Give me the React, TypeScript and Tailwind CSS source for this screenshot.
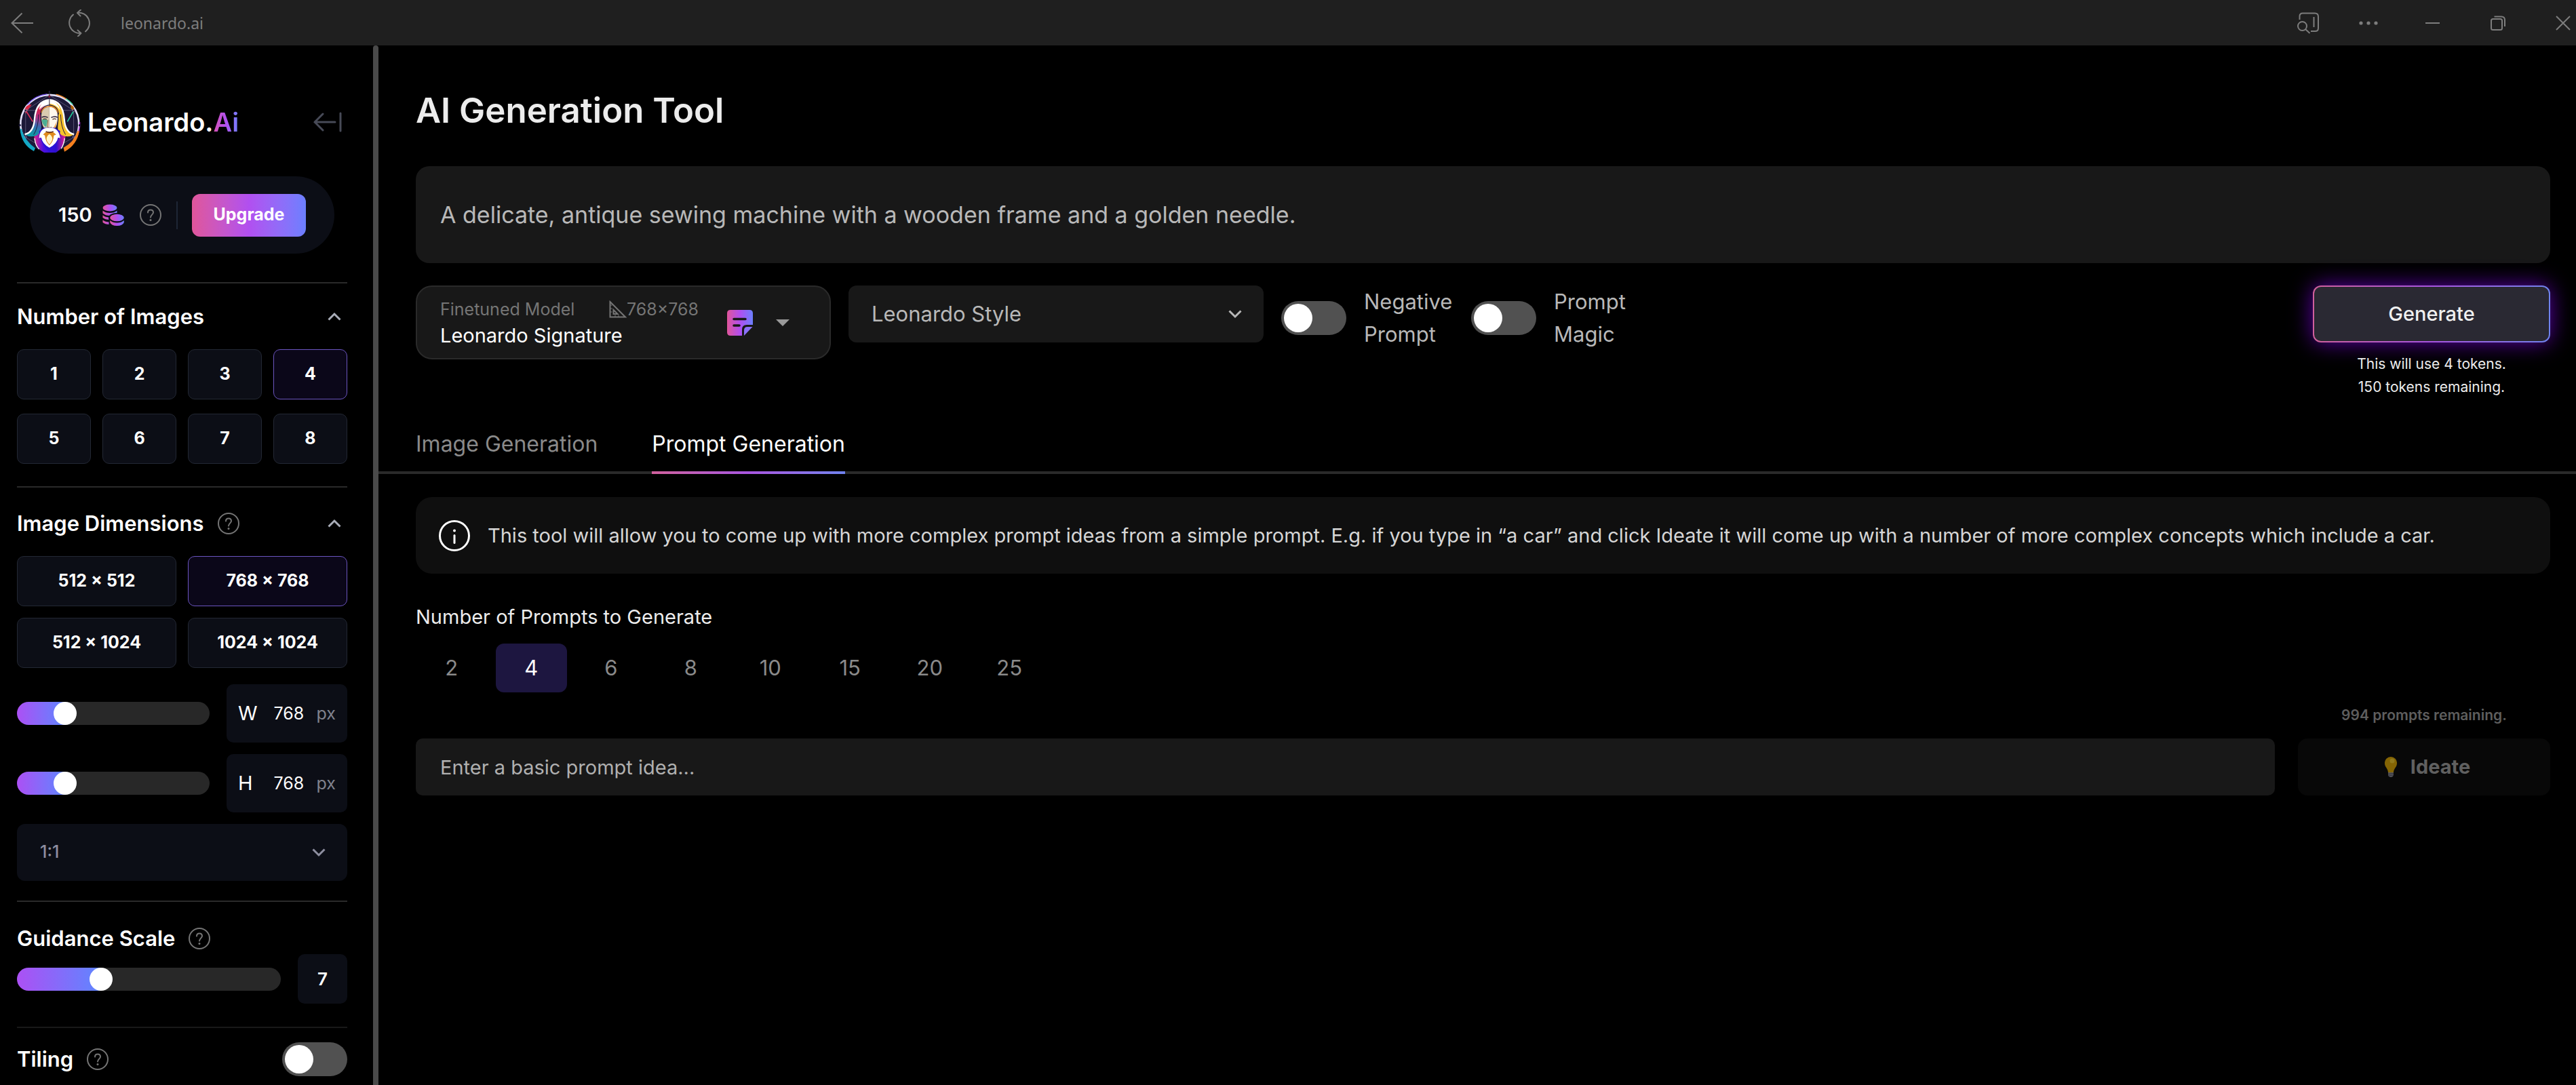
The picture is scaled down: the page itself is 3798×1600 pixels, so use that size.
import { useState } from "react";
import type { ReactNode } from "react";
import clsx from "clsx";

const IMAGE_COUNTS = [1, 2, 3, 4, 5, 6, 7, 8];
const DIMENSIONS = ["512 × 512", "768 × 768", "512 × 1024", "1024 × 1024"];
const PROMPT_COUNTS = [2, 4, 6, 8, 10, 15, 20, 25];

function BrandGradient({ id }: { id: string }) {
  return (
    <linearGradient id={id} x1="0" y1="0" x2="1" y2="0">
      <stop offset="0" stopColor="#e0559a" />
      <stop offset="0.5" stopColor="#b14ff0" />
      <stop offset="1" stopColor="#6b7fff" />
    </linearGradient>
  );
}

function LogoMark() {
  return (
    <svg viewBox="20 8 280 284" className="h-[94px] w-[93px] shrink-0" aria-hidden fill="none">
      <defs>
        <linearGradient id="hairLeft" gradientUnits="userSpaceOnUse" x1="130" y1="70" x2="80" y2="205">
          <stop offset="0" stopColor="#ffffff" />
          <stop offset="0.2" stopColor="#d8204c" />
          <stop offset="0.45" stopColor="#b03484" />
          <stop offset="0.7" stopColor="#3b6bb0" />
          <stop offset="1" stopColor="#0f98a5" />
        </linearGradient>
        <linearGradient id="robe" x1="0" y1="0" x2="1" y2="0">
          <stop offset="0" stopColor="#e0248a" />
          <stop offset="0.3" stopColor="#4a10e0" />
          <stop offset="0.7" stopColor="#2a0fd0" />
          <stop offset="1" stopColor="#f0208a" />
        </linearGradient>
        <clipPath id="logoClip">
          <path d="M20 8h280v278H20z" />
        </clipPath>
      </defs>
      <g clipPath="url(#logoClip)">
        <circle cx="159" cy="158" r="126" fill="#1c1838" />
        <path d="M52 232A130 130 0 1 1 268 230" stroke="#e4e0fa" strokeWidth="8" />
        <path d="M60 72A132 132 0 0 1 148 25" stroke="#6d4ae8" strokeWidth="4" />
        <path d="M188 27a134 134 0 0 1 48 22" stroke="#f08a2c" strokeWidth="5" />
        <path d="M232 46a134 134 0 0 1 30 26" stroke="#52e0b0" strokeWidth="5" />
        <path d="M47 96q8-26 32-24L52 112z" fill="#dc2440" />
        <path d="M252 74q20 4 16 32l-14-16z" fill="#b46408" />
        <path d="M293 150a134 134 0 0 1-20 80" stroke="#a32cc8" strokeWidth="5" />
        <path d="M27 180q6 70 62 100l6-14q-44-30-62-86z" fill="#14a8c4" />
        <path d="M291 190q-10 62-66 92l-4-18q46-24 62-74z" fill="#f5801e" />
        <g stroke="#77708f" strokeWidth="2">
          <path d="M158 30L52 98v120l106 62 108-62V98zM52 98h214" />
        </g>
        <path d="M56 104l28 44" stroke="#e03058" strokeWidth="5" />
        <path d="M264 104l-26 44" stroke="#20c898" strokeWidth="5" />
        {/* robe */}
        <path d="M90 214q4 52 48 74h46q38-22 46-74l-34-30h-72z" fill="url(#robe)" />
        <path d="M92 222q4 34 20 48M226 222q-4 30-16 46" stroke="#ffffff" strokeWidth="4" />
        {/* hair */}
        <path d="M158 50C112 52 98 92 94 136C90 176 76 200 48 206Q76 222 104 208Q124 192 122 164Q116 140 118 118Q120 88 158 78Z" fill="url(#hairLeft)" />
        <path d="M158 50C204 52 218 92 222 136C226 176 240 200 268 206Q240 222 212 208Q192 192 196 164Q200 140 198 118Q196 88 158 78Z" fill="#f8c32c" />
        <path d="M48 205C80 198 90 168 92 136C96 84 118 54 158 51C198 54 220 84 224 136C226 168 236 198 268 205" stroke="#ffffff" strokeWidth="7" />
        <path d="M112 96Q120 58 158 50Q196 58 206 96Q188 72 158 68Q130 72 112 96Z" fill="#ffffff" />
        <path d="M110 116Q108 176 88 206M208 116Q210 176 230 206" stroke="#20183c" strokeWidth="3" />
        {/* face */}
        <path d="M158 80Q122 86 122 124Q122 168 140 182L158 188Z" fill="#d9cbb0" />
        <path d="M158 80Q194 86 195 124Q195 168 178 182L158 188Z" fill="#fff8ec" />
        <path d="M124 140Q136 134 150 142L144 172Q126 164 124 140Z" fill="#4cae94" />
        <path d="M193 138L186 174L172 180Q188 160 193 138Z" fill="#f0a850" />
        <path d="M152 140L149 172L158 176L168 172" stroke="#8a6848" strokeWidth="3" />
        <path d="M124 129Q138 122 151 130M166 130Q180 122 194 129" stroke="#2a1c38" strokeWidth="5" />
        <path d="M130 138Q138 132 146 139M172 139Q180 132 188 138" stroke="#5a3c2c" strokeWidth="4" />
        <path d="M118 116Q122 78 158 74Q196 78 199 116" stroke="#20183c" strokeWidth="4" />
        <path d="M122 108Q128 82 158 80Q190 82 195 108" stroke="#e8821c" strokeWidth="4" />
        {/* beard */}
        <path d="M112 190Q118 250 158 284Q200 250 206 190L182 176H134Z" fill="#2b12d8" />
        <path d="M158 176C128 174 114 190 112 222Q118 218 122 220Q126 246 158 264Q192 246 196 220Q200 218 206 222C202 190 188 174 158 176Z" fill="#ffffff" />
        <path d="M130 206Q142 190 158 194Q174 190 188 206L178 210Q176 238 158 254Q140 238 138 210Z" fill="#df8a1c" />
        <path d="M158 204Q184 222 158 250Q132 222 158 204Z" fill="#fff4c8" />
        <path d="M142 192Q158 200 176 192" stroke="#4a1c18" strokeWidth="4" />
        <path d="M158 10v62" stroke="#2a1c38" strokeWidth="3" />
        <circle cx="158" cy="36" r="5" fill="#7c1838" />
        <g fill="#16122c" stroke="#a8a0c8" strokeWidth="2">
          <circle cx="52" cy="98" r="5" />
          <circle cx="266" cy="98" r="5" />
          <circle cx="52" cy="216" r="4" />
          <circle cx="266" cy="216" r="4" />
        </g>
      </g>
      <circle cx="158" cy="16" r="4" fill="#1c1838" />
      <circle cx="26" cy="164" r="5" fill="#1c1838" />
      <circle cx="293" cy="164" r="5" fill="#1c1838" />
    </svg>
  );
}

function CoinsIcon() {
  return (
    <svg viewBox="0 0 32 32" className="size-8" aria-hidden>
      <defs>
        <BrandGradient id="coins" />
        <mask id="coinsMask">
          <path fill="#fff" d="M0 0h32v32H0z" />
          <ellipse cx="21" cy="20" rx="12" ry="7" fill="#000" />
          <path fill="#000" d="M9.500 20h23v12h-23z" />
        </mask>
      </defs>
      <g fill="url(#coins)">
        <g mask="url(#coinsMask)">
          <path d="M0.500 5.500a10.500 5 0 1 0 21 0a10.500 5 0 1 0-21 0zM0.500 9.500q4 3.500 10.500 3.500t10.500-3.500v4q-4 3.500-10.500 3.500T0.500 13.500zM0.500 16.200q4 3.300 9.500 3.300v3.500Q4 23 0.500 20zM0.500 23.200q4 3.300 9.500 3.300V30Q4 30 0.500 27z" />
        </g>
        <ellipse cx="21.500" cy="20" rx="10.300" ry="5.200" />
        <path d="M11.200 24q4 3.600 10.300 3.600T31.800 24v3q-2 5-10.300 5t-10.300-5z" />
      </g>
    </svg>
  );
}

function HelpIcon() {
  return (
    <svg viewBox="0 0 32 32" className="size-8 shrink-0" fill="none" stroke="#757575" strokeWidth="2" aria-hidden>
      <circle cx="16" cy="16" r="15" />
      <path d="M12 12.500c0-2.500 1.700-4 4-4s4 1.500 4 3.700c0 3.300-4 3.600-4 7.300" strokeLinecap="round" />
      <circle cx="16" cy="23.500" r="1.500" fill="#757575" stroke="none" />
    </svg>
  );
}

function HelpButton({ topic }: { topic: string }) {
  return (
    <button type="button" aria-label={`About ${topic}`}>
      <HelpIcon />
    </button>
  );
}

function Chevron({ up, className }: { up?: boolean; className?: string }) {
  return (
    <svg viewBox="0 0 20 14" className={clsx("h-[14px] w-5", className)} fill="none" stroke="currentColor" strokeWidth="3" aria-hidden>
      <path d={up ? "M1.500 11.500l8.500-8.500 8.500 8.500" : "M1.500 2.500l8.500 8.500 8.500-8.500"} />
    </svg>
  );
}

function Toggle({ label }: { label: string }) {
  return (
    <input
      type="checkbox"
      role="switch"
      aria-label={label}
      className="flex h-[50px] w-24 shrink-0 cursor-pointer appearance-none items-center rounded-full bg-[#515151] px-1 before:size-[42px] before:rounded-full before:bg-white checked:justify-end checked:bg-[#7c3aed]"
    />
  );
}

function Slider({ label, min, max, value, onChange }: { label: string; min: number; max: number; value: number; onChange: (v: number) => void }) {
  const ratio = (value - min) / (max - min);
  const stop = `calc(17px + (100% - 34px) * ${ratio})`;
  return (
    <input
      type="range"
      aria-label={label}
      min={min}
      max={max}
      value={value}
      onChange={(e) => onChange(Number(e.target.value))}
      className="h-[34px] min-w-0 flex-1 cursor-pointer appearance-none rounded-full [&::-webkit-slider-thumb]:size-[34px] [&::-webkit-slider-thumb]:appearance-none [&::-webkit-slider-thumb]:rounded-full [&::-webkit-slider-thumb]:bg-white"
      style={{ background: `linear-gradient(90deg, #ac50f4, #5f86ff ${stop}, #282828 ${stop})` }}
    />
  );
}

function OptionButton({ active, onClick, children }: { active: boolean; onClick: () => void; children: ReactNode }) {
  return (
    <button
      type="button"
      aria-pressed={active}
      onClick={onClick}
      className={clsx(
        "h-[74px] rounded-[10px] border text-[25px] font-bold text-white",
        active ? "border-[#6b55c0] bg-[#0b0719]" : "border-[#232834] bg-[#0c0e16]"
      )}
    >
      {children}
    </button>
  );
}

function SizeField({ letter, label, value, onChange }: { letter: string; label: string; value: number; onChange: (v: number) => void }) {
  return (
    <div className="flex items-center gap-[25px]">
      <Slider label={`${label} slider`} min={512} max={1696} value={value} onChange={onChange} />
      <label className="flex h-[86px] w-[178px] items-center justify-between rounded-[10px] bg-[#0c0e16] px-[17px]">
        <span className="text-[29px] text-white">{letter}</span>
        <span className="flex items-center gap-4 pt-[2px] text-[25px]">
          <input
            type="text"
            aria-label={label}
            value={value}
            onChange={(e) => onChange(Number(e.target.value) || 512)}
            className="w-[47px] bg-transparent text-white outline-none"
          />
          <span className="text-[#80828e]">px</span>
        </span>
      </label>
    </div>
  );
}

function TitleBar() {
  return (
    <header className="flex h-[67px] shrink-0 items-center bg-[#1f1f1f] text-[#7d7d7d]">
      <button type="button" aria-label="Back" className="ml-4">
        <svg viewBox="0 0 34 32" className="h-8 w-[34px]" fill="none" stroke="currentColor" strokeWidth="2" aria-hidden>
          <path d="M33 16H1.500M16.500 1.500L1.500 16l15 14.500" />
        </svg>
      </button>
      <button type="button" aria-label="Reload" className="ml-[50px]">
        <svg viewBox="0 0 34 40" className="h-10 w-[34px]" fill="none" stroke="currentColor" strokeWidth="2" strokeLinecap="round" strokeLinejoin="round" aria-hidden>
          <path d="M8 7.500A15.500 15.500 0 0 0 19.500 35M14.500 30.500l5 4.500-4.500 4.500" />
          <path d="M26 32.500A15.500 15.500 0 0 0 14 5M19 .5L14 5l4.500 4.500" />
        </svg>
      </button>
      <span className="ml-[44px] pt-[2px] font-['Noto_Sans',sans-serif] text-[23px]">leonardo.ai</span>
      <div className="ml-auto flex items-center pr-2">
        <button type="button" aria-label="Search in sidebar">
          <svg viewBox="0 0 32 32" className="size-8" fill="none" stroke="currentColor" strokeWidth="2" aria-hidden>
            <path d="M3.500 11V6q0-4.500 4.500-4.500h18q5 0 5 5v17q0 4.500-4.500 4.500H20M24.500 7v15" />
            <circle cx="7.500" cy="20.500" r="6.500" />
            <path d="M12 25l6.500 6" />
          </svg>
        </button>
        <button type="button" aria-label="More" className="ml-[59px]">
          <svg viewBox="0 0 28 6" className="h-[6px] w-7" fill="currentColor" aria-hidden>
            <circle cx="3" cy="3" r="2.600" />
            <circle cx="14" cy="3" r="2.600" />
            <circle cx="25" cy="3" r="2.600" />
          </svg>
        </button>
        <button type="button" aria-label="Minimize" className="ml-[70px] flex h-[22px] w-[21px] items-center">
          <span className="h-[2px] flex-1 bg-[#7d7d7d]" />
        </button>
        <button type="button" aria-label="Restore" className="ml-[75px]">
          <svg viewBox="0 0 22 22" className="size-[22px]" fill="none" stroke="currentColor" strokeWidth="2" aria-hidden>
            <rect x="1" y="5" width="16" height="16" rx="2.500" />
            <path d="M5.500 1.500H16q5 0 5 5V16" />
          </svg>
        </button>
        <button type="button" aria-label="Close" className="ml-[74px]">
          <svg viewBox="0 0 22 22" className="size-[22px]" fill="none" stroke="currentColor" strokeWidth="2" aria-hidden>
            <path d="M1 1l20 20M21 1L1 21" />
          </svg>
        </button>
      </div>
    </header>
  );
}

function SectionHeading({ children, help, collapsible }: { children: string; help?: boolean; collapsible?: boolean }) {
  return (
    <div className="flex h-10 items-center">
      <h2 className="text-[31px] leading-10 font-semibold text-white">{children}</h2>
      {help ? (
        <span className="ml-5 flex">
          <HelpButton topic={children} />
        </span>
      ) : null}
      {collapsible ? (
        <button type="button" aria-label={`Collapse ${children}`} className="mr-[9px] ml-auto text-[#a9adb8]">
          <Chevron up />
        </button>
      ) : null}
    </div>
  );
}

function Sidebar() {
  const [count, setCount] = useState(4);
  const [dimension, setDimension] = useState("768 × 768");
  const [width, setWidth] = useState(768);
  const [height, setHeight] = useState(768);
  const [guidance, setGuidance] = useState(7);

  return (
    <aside className="flex w-[558px] shrink-0">
      <div className="flex-1 pr-[38px] pl-[25px]">
        <div className="mt-[66px] flex h-[94px] items-center">
          <a href="#home" className="flex items-center pl-[2px]">
            <LogoMark />
            <span className="ml-[9px] text-[38px] font-semibold text-white">
              Leonardo.
              <span className="bg-linear-to-r from-[#d94fb0] via-[#b14ff0] to-[#6b7fff] bg-clip-text text-transparent">Ai</span>
            </span>
          </a>
          <button type="button" aria-label="Collapse sidebar" className="mr-[8px] ml-auto text-[#474a57]">
            <svg viewBox="0 0 42 30" className="h-[30px] w-[42px]" fill="none" stroke="currentColor" strokeWidth="3" strokeLinecap="round" aria-hidden>
              <path d="M32 15H2M14 3L2 15l12 12M40 2v26" />
            </svg>
          </button>
        </div>

        <div className="mx-[19px] mt-[33px] flex h-[114px] items-center rounded-full bg-[#0c0e16] px-[42px]">
          <span className="text-[29px] font-semibold text-white">150</span>
          <span className="ml-[15px]">
            <CoinsIcon />
          </span>
          <span className="ml-[23px] flex">
            <HelpButton topic="tokens" />
          </span>
          <span className="ml-[22px] h-[41px] w-[2px] bg-[#1e2636]" />
          <button
            type="button"
            className="ml-auto h-[63px] w-[168px] rounded-xl bg-linear-to-r from-[#e0559a] via-[#b14ff0] to-[#6b7fff] text-[25px] font-bold text-white"
          >
            Upgrade
          </button>
        </div>

        <section className="mt-[42px] border-t-2 border-[#2a2a2a] pt-[29px]">
          <SectionHeading collapsible>Number of Images</SectionHeading>
          <div className="mt-[28px] grid grid-cols-4 gap-x-[17px] gap-y-[21px]">
            {IMAGE_COUNTS.map((n) => (
              <OptionButton key={n} active={n === count} onClick={() => setCount(n)}>
                {n}
              </OptionButton>
            ))}
          </div>
        </section>

        <section className="mt-[33px] border-t-2 border-[#2a2a2a] pt-[33px]">
          <SectionHeading help collapsible>
            Image Dimensions
          </SectionHeading>
          <div className="mt-[28px] grid grid-cols-2 gap-[17px]">
            {DIMENSIONS.map((d) => (
              <OptionButton key={d} active={d === dimension} onClick={() => setDimension(d)}>
                {d}
              </OptionButton>
            ))}
          </div>
          <div className="mt-6 flex flex-col gap-[17px]">
            <SizeField letter="W" label="Width" value={width} onChange={setWidth} />
            <SizeField letter="H" label="Height" value={height} onChange={setHeight} />
            <div className="relative">
              <select
                aria-label="Aspect ratio"
                defaultValue="1:1"
                className="h-[84px] w-full appearance-none rounded-[12px] bg-[#0c0e16] px-[34px] text-[25px] font-medium text-[#8e8fa0]"
              >
                <option>1:1</option>
                <option>16:9</option>
                <option>4:3</option>
              </select>
              <Chevron className="pointer-events-none absolute top-[35px] right-8 text-[#8e8fa0]" />
            </div>
          </div>
        </section>

        <section className="mt-[29px] border-t-2 border-[#2a2a2a] pt-[34px]">
          <SectionHeading help>Guidance Scale</SectionHeading>
          <div className="mt-[3px] flex items-center gap-[25px]">
            <Slider label="Guidance Scale" min={1} max={21} value={guidance} onChange={setGuidance} />
            <output className="flex h-[73px] w-[73px] items-center justify-center rounded-[10px] bg-[#0c0e16] text-[26px] font-semibold text-white">
              {guidance}
            </output>
          </div>
        </section>

        <section className="mt-[34px] flex items-center justify-between border-t-2 border-[#181818] pt-[21px]">
          <SectionHeading help>Tiling</SectionHeading>
          <Toggle label="Tiling" />
        </section>
      </div>
      <div className="w-2 rounded-t-full bg-[#4a4a4a]" />
    </aside>
  );
}

function ModelPicker() {
  return (
    <button type="button" className="flex h-[109px] w-[612px] items-center rounded-3xl border-2 border-[#2a2a2a] bg-[#181818] px-[34px] text-left">
      <span className="flex w-[381px] flex-col">
        <span className="flex items-center justify-between text-[25px] leading-[38px] text-[#757575]">
          Finetuned Model
          <span className="flex items-center">
            <svg viewBox="0 0 26 26" className="size-[26px]" fill="none" stroke="#757575" strokeWidth="2" aria-hidden>
              <path d="M1.500 2v22.500H24zM6.500 14v6h6z" />
              <path d="M1.500 7h3M1.500 12h3M1.500 17h3M9 24.500v-3M14 24.500v-3" strokeWidth="1" />
            </svg>
            768×768
          </span>
        </span>
        <span className="text-[29px] leading-10 text-white">Leonardo Signature</span>
      </span>
      <svg viewBox="0 0 38 38" className="ml-[42px] size-[38px]" aria-hidden>
        <defs>
          <BrandGradient id="note" />
        </defs>
        <path d="M5 0h28q5 0 5 5v17h-9q-7 0-7 7v9H5q-5 0-5-5V5q0-5 5-5z" fill="url(#note)" />
        <path d="M25 38v-8q0-5 5-5h7.500z" fill="#8b70fa" />
        <path d="M10 13.500h17M10 23h8" stroke="#181818" strokeWidth="3.500" strokeLinecap="round" />
      </svg>
      <svg viewBox="0 0 20 10" className="ml-[34px] h-[10px] w-5" fill="#9a9a9a" aria-hidden>
        <path d="M0 0h20L10 10z" />
      </svg>
    </button>
  );
}

function TabLink({ href, active, children }: { href: string; active?: boolean; children: ReactNode }) {
  return (
    <a href={href} aria-current={active ? "page" : undefined} className={clsx("-mb-1 flex flex-col", active ? "text-white" : "text-[#8a8a8a]")}>
      <span className="pb-4">{children}</span>
      {active ? <span className="h-1 bg-linear-to-r from-[#d0609c] via-[#a855e0] to-[#6f82ee]" /> : null}
    </a>
  );
}

function PromptGeneration() {
  const [count, setCount] = useState(4);
  return (
    <div className="pr-[38px] pl-[55px]">
      <div className="mt-[34px] flex h-[113px] items-center rounded-3xl bg-[#0f0f0f] px-[33px]">
        <svg viewBox="0 0 48 48" className="size-12 shrink-0" fill="none" stroke="#fff" strokeWidth="3" strokeLinecap="round" aria-hidden>
          <circle cx="24" cy="24" r="21.500" />
          <path d="M24 23.500v11" />
          <circle cx="24" cy="16.500" r="2" fill="#fff" stroke="none" />
        </svg>
        <p className="ml-[25px] text-[29px] text-[#d6d6d6]">
          This tool will allow you to come up with more complex prompt ideas from a simple prompt. E.g. if you type in “a car” and click Ideate it will come up with a number of more complex concepts which include a car.
        </p>
      </div>

      <h2 className="mt-[44px] text-[29px] leading-10 text-[#ececec]">Number of Prompts to Generate</h2>
      <div className="mt-[19px] flex w-[928px] gap-3">
        {PROMPT_COUNTS.map((n) => (
          <button
            key={n}
            type="button"
            aria-pressed={n === count}
            onClick={() => setCount(n)}
            className={clsx("h-[72px] flex-1 rounded-xl text-[31px]", n === count ? "bg-[#1d1640] text-white" : "text-[#8a8a8a]")}
          >
            {n}
          </button>
        ))}
      </div>

      <div className="mt-[19px] flex items-end gap-[34px]">
        <input
          type="text"
          aria-label="Basic prompt idea"
          placeholder="Enter a basic prompt idea..."
          className="h-[84px] min-w-0 flex-1 rounded-[10px] bg-[#181818] px-9 text-[29px] text-white outline-none placeholder:text-[#b0b0b0]"
        />
        <div className="flex w-[372px] flex-col">
          <p className="text-center text-[21px] leading-[30px] font-semibold text-[#5e5e5e]">994 prompts remaining.</p>
          <button
            type="button"
            className="mt-[19px] flex h-[84px] items-center justify-center gap-5 rounded-[14px] bg-[#080808] pl-[10px] text-[29px] font-bold text-[#606060]"
          >
            <svg viewBox="0 0 18 30" className="h-[30px] w-[18px]" aria-hidden>
              <path d="M9 0a9 9 0 0 1 9 9.500c0 6-4.500 7-5 13.500H5C4.500 16.500 0 15.500 0 9.500A9 9 0 0 1 9 0z" fill="#846404" />
              <circle cx="11" cy="6" r="3.500" fill="#927a1c" />
              <path d="M5 23h8v4q-1 3-4 3t-4-3z" fill="#55555c" />
              <path d="M5 25.500l8-1M5 28l8-1" stroke="#33333a" strokeWidth="1" />
            </svg>
            Ideate
          </button>
        </div>
      </div>
    </div>
  );
}

export default function App() {
  return (
    <div className="flex min-h-screen flex-col bg-black font-['Inter',sans-serif]">
      <TitleBar />
      <div className="flex flex-1">
        <Sidebar />
        <main className="min-w-0 flex-1 pt-[66px]">
          <div className="pr-[38px] pl-[55px]">
            <h1 className="text-[51px] leading-[60px] font-semibold text-[#ececec]">AI Generation Tool</h1>
            <input
              type="text"
              aria-label="Prompt"
              defaultValue="A delicate, antique sewing machine with a wooden frame and a golden needle."
              className="mt-[52px] block h-[143px] w-full rounded-[20px] bg-[#181818] px-9 text-[34px] text-[#b8b8b8] outline-none"
            />
            <div className="mt-[33px] flex items-start gap-[26px]">
              <ModelPicker />
              <div className="relative w-[612px]">
                <select
                  aria-label="Style"
                  defaultValue="Leonardo Style"
                  className="h-[84px] w-full appearance-none rounded-[12px] bg-[#181818] px-[34px] text-[31px] text-[#b8b8b8]"
                >
                  <option>Leonardo Style</option>
                  <option>None</option>
                </select>
                <Chevron className="pointer-events-none absolute top-[35px] right-8 text-[#b8b8b8]" />
              </div>
              <div className="flex items-center gap-[26px] text-[31px] leading-[48px] text-[#b8b8b8]">
                <Toggle label="Negative Prompt" />
                <span className="w-[132px]">Negative Prompt</span>
                <Toggle label="Prompt Magic" />
                <span className="w-[132px]">Prompt Magic</span>
              </div>
              <div className="ml-auto flex w-[350px] flex-col">
                <button
                  type="button"
                  className="h-[84px] rounded-xl bg-linear-to-r from-[#d0609c] via-[#a855e0] to-[#6f82ee] p-[2px] shadow-[0_0_32px_#5b00a8]"
                >
                  <span className="flex h-full items-center justify-center rounded-[10px] bg-[#2a2933] text-[29px] font-medium text-[#f0f0f0]">
                    Generate
                  </span>
                </button>
                <p className="mt-[15px] text-center text-[21px] leading-[34px] text-[#ececec]">
                  This will use 4 tokens.
                  <br />
                  150 tokens remaining.
                </p>
              </div>
            </div>
          </div>

          <nav aria-label="Generation mode" className="mt-[43px] flex gap-20 border-b-4 border-[#2a2a2a] pl-[55px] text-[32px] leading-[48px]">
            <TabLink href="#image">Image Generation</TabLink>
            <TabLink href="#prompt" active>
              Prompt Generation
            </TabLink>
          </nav>

          <PromptGeneration />
        </main>
      </div>
    </div>
  );
}
